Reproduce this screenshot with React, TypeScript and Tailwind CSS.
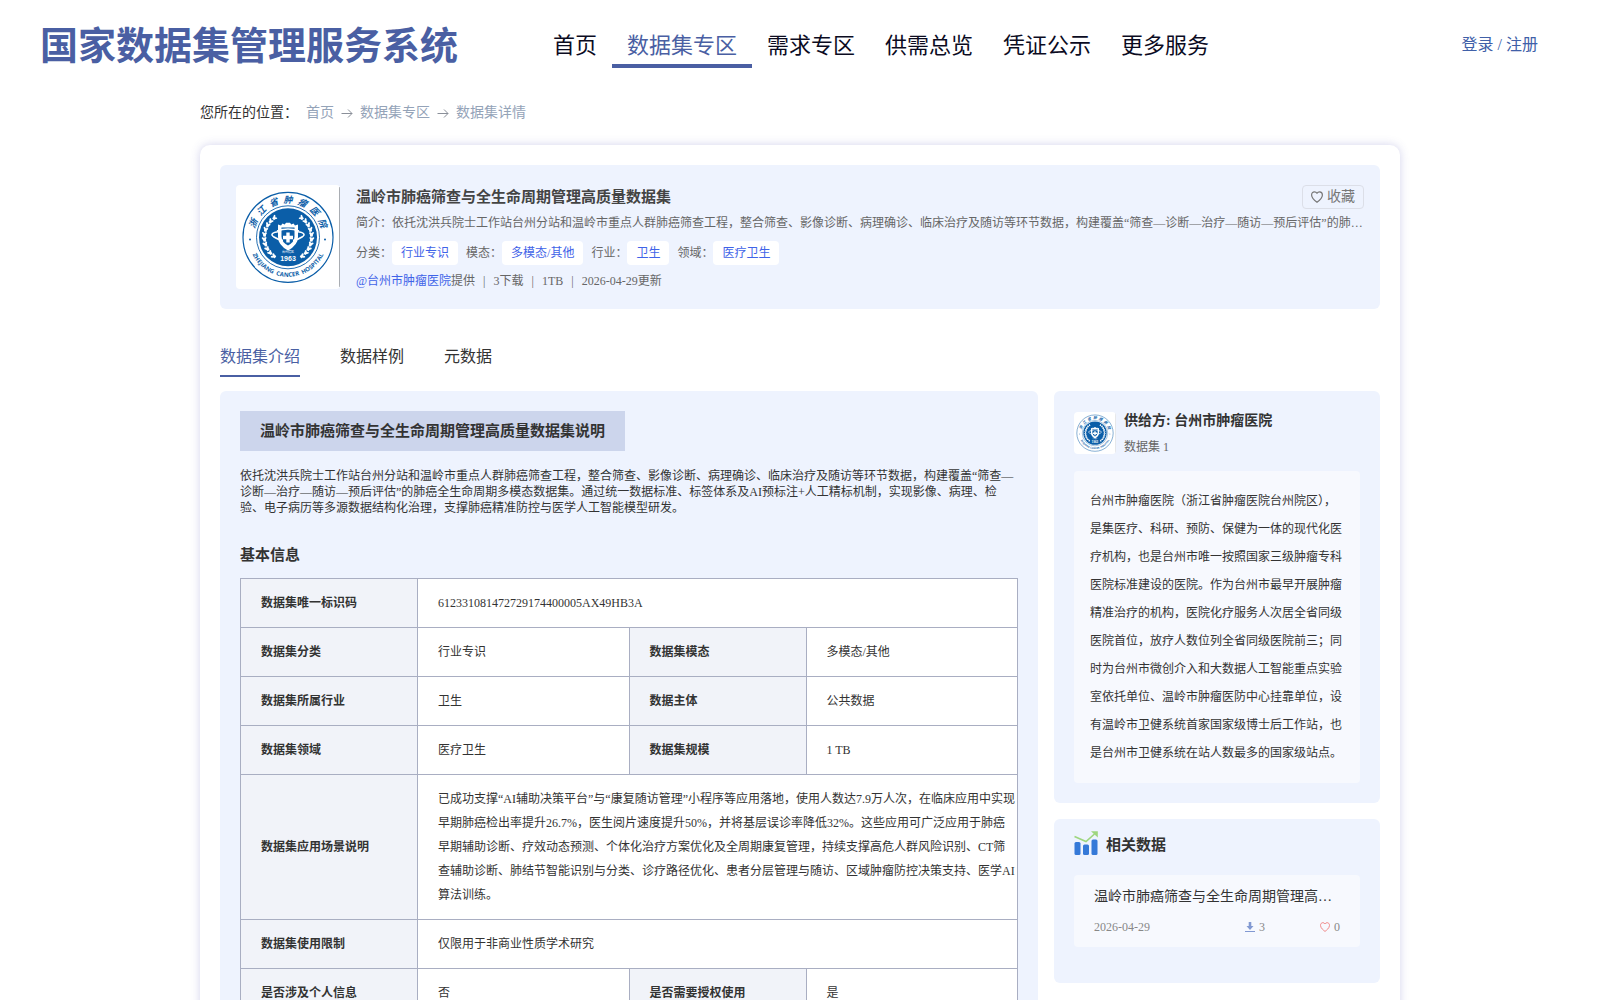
import React, { useState } from "react";

const navItems = ["首页", "数据集专区", "需求专区", "供需总览", "凭证公示", "更多服务"];
const crumbs = ["首页", "数据集专区", "数据集详情"];
const tabs = ["数据集介绍", "数据样例", "元数据"];
const tags = [
    { label: "分类：", value: "行业专识" },
    { label: "模态：", value: "多模态/其他" },
    { label: "行业：", value: "卫生" },
    { label: "领域：", value: "医疗卫生" },
];

const datasetName = "温岭市肺癌筛查与全生命周期管理高质量数据集";
const intro =
    "依托沈洪兵院士工作站台州分站和温岭市重点人群肺癌筛查工程，整合筛查、影像诊断、病理确诊、临床治疗及随访等环节数据，构建覆盖“筛查—诊断—治疗—随访—预后评估”的肺癌全生命周期多模态数据集。通过统一数据标准、标签体系及AI预标注+人工精标机制，实现影像、病理、检验、电子病历等多源数据结构化治理，支撑肺癌精准防控与医学人工智能模型研发。";
const supplierText =
    "台州市肿瘤医院（浙江省肿瘤医院台州院区），是集医疗、科研、预防、保健为一体的现代化医疗机构，也是台州市唯一按照国家三级肿瘤专科医院标准建设的医院。作为台州市最早开展肿瘤精准治疗的机构，医院化疗服务人次居全省同级医院首位，放疗人数位列全省同级医院前三；同时为台州市微创介入和大数据人工智能重点实验室依托单位、温岭市肿瘤医防中心挂靠单位，设有温岭市卫健系统首家国家级博士后工作站，也是台州市卫健系统在站人数最多的国家级站点。";

// one or two label/value pairs per row
const rows: string[][] = [
    ["数据集唯一标识码", "612331081472729174400005AX49HB3A"],
    ["数据集分类", "行业专识", "数据集模态", "多模态/其他"],
    ["数据集所属行业", "卫生", "数据主体", "公共数据"],
    ["数据集领域", "医疗卫生", "数据集规模", "1 TB"],
    [
        "数据集应用场景说明",
        "已成功支撑“AI辅助决策平台”与“康复随访管理”小程序等应用落地，使用人数达7.9万人次，在临床应用中实现早期肺癌检出率提升26.7%，医生阅片速度提升50%，并将基层误诊率降低32%。这些应用可广泛应用于肺癌早期辅助诊断、疗效动态预测、个体化治疗方案优化及全周期康复管理，持续支撑高危人群风险识别、CT筛查辅助诊断、肺结节智能识别与分类、诊疗路径优化、患者分层管理与随访、区域肿瘤防控决策支持、医学AI算法训练。",
    ],
    ["数据集使用限制", "仅限用于非商业性质学术研究"],
    ["是否涉及个人信息", "否", "是否需要授权使用", "是"],
];

const leaves = [-50, -38, -26, -14, -2, 10, 22, 34, 46, 58];

function HospitalLogo({ id, className }: { id: string; className: string }) {
    return (
        <svg viewBox="0 0 104 104" className={className} role="img" aria-label="浙江省肿瘤医院">
            <defs>
                <path id={`${id}-top`} d="M 19.9 64 A 34.2 34.2 0 1 1 84.1 64" />
                <path id={`${id}-bottom`} d="M 12.5 52.3 A 39.5 39.5 0 0 0 91.5 52.3" />
            </defs>
            <rect width="104" height="104" fill="#fff" />
            <path d="M103.5 2V102" stroke="#a9adb3" strokeWidth="1" />
            <circle cx="52" cy="52.3" r="45" fill="none" stroke="#0b5ea8" strokeWidth="1.2" />
            <circle cx="52" cy="52.3" r="31.5" fill="none" stroke="#0b5ea8" strokeWidth="0.9" />
            <circle cx="52" cy="52.3" r="29" fill="#0b5ea8" />
            <text fill="#0b5ea8" fontSize="9" fontWeight="bold" fontStyle="italic" textAnchor="middle">
                <textPath href={`#${id}-top`} startOffset="50%">
                    {"浙\u2002江\u2002省\u2002肿\u2002瘤\u2002医\u2002院"}
                </textPath>
            </text>
            <text fill="#0b5ea8" fontSize="6" fontWeight="bold" fontFamily="Open Sans" textAnchor="middle">
                <textPath href={`#${id}-bottom`} startOffset="50%">{"ZHEJIANG\u2002CANCER\u2002HOSPITAL"}</textPath>
            </text>
            <circle cx="14" cy="54.5" r="1" fill="#0b5ea8" />
            <circle cx="89" cy="54.5" r="1" fill="#0b5ea8" />
            {[-1, 1].map((side) => (
                <g key={side} transform={`translate(52 52.3) scale(${side} 1)`}>
                    <path d="M17 -16 A 23.500 23.500 0 0 1 13 19.500" fill="none" stroke="#fff" strokeWidth="0.6" />
                    {leaves.map((a) => (
                        <g key={a} transform={`rotate(${a}) translate(23.500 0)`} fill="#fff">
                            <ellipse cx="-1.800" cy="-1" rx="2.600" ry="1" transform="rotate(50)" />
                            <ellipse cx="2" cy="-1" rx="2.800" ry="1.100" transform="rotate(-50)" />
                        </g>
                    ))}
                </g>
            ))}
            <path d="M42 39.500l3 1 1.500-2 2.200 1 1.300-1.700h4l1.300 1.700 2.200-1 1.500 2 3-1v12.500q0 8-10 13.500q-10-5.500-10-13.500z" fill="#fff" />
            <path d="M45.500 42.500h13v9q0 5.500-6.500 9q-6.500-3.500-6.500-9z" fill="#0b5ea8" />
            <path d="M50.300 47.500h3.400v3.300h3.300v3.400h-3.300v3.300h-3.400v-3.300h-3.300v-3.400h3.300z" fill="#fff" />
            <path d="M43 46.500C36 47.500 34 49.500 38 52c3 2 6 3 9 3.500M61 46.500c7 1 9 3 5 5.500c-3 2-6 3-9 3.500M41 46q11-4 22 0" fill="none" stroke="#fff" strokeWidth="1.600" />
            <text x="52" y="68" fill="#fff" fontSize="3" textAnchor="middle">台州院区</text>
            <text x="52" y="76" fill="#fff" fontSize="7" fontWeight="bold" fontFamily="Liberation Sans" textAnchor="middle">1963</text>
        </svg>
    );
}

function Heart({ className }: { className: string }) {
    return (
        <svg viewBox="0 0 12 12" className={className} fill="none" stroke="currentColor" strokeWidth="1.200" strokeLinejoin="round">
            <path d="M6 11.300C4.500 10.200 .6 7.300 .6 4C.6 2.100 1.900 .8 3.400 .8C4.600 .8 5.500 1.400 6 2.300C6.500 1.400 7.400 .8 8.600 .8C10.100 .8 11.400 2.100 11.400 4C11.400 7.300 7.500 10.200 6 11.300Z" />
        </svg>
    );
}

export default function App() {
    const [activeTab, setActiveTab] = useState(tabs[0]);
    const [liked, setLiked] = useState(false);

    return (
        <div className="min-h-screen bg-white text-[#333] font-['Liberation_Serif','Noto_Sans_CJK_SC',serif]">
            <header className="flex h-[90px] items-center pl-10 pr-[62px]">
                <h1 className="w-[498px] pt-0.5 text-[38px] font-bold text-[#4a5fa3]">国家数据集管理服务系统</h1>
                <nav className="flex flex-1">
                    {navItems.map((item) => (
                        <a
                            key={item}
                            href="#"
                            className={`px-[15px] pt-1.5 h-[46px] text-[22px] leading-9 border-b-4 ${
                                item === "数据集专区" ? "border-[#4a5fa3] text-[#4a5fa3]" : "border-transparent text-[#0b0b1f]"
                            }`}
                        >
                            {item}
                        </a>
                    ))}
                </nav>
                <a href="#" className="text-base text-[#4060a8]">登录 / 注册</a>
            </header>

            <div className="mx-auto w-full max-w-[1200px]">
                <div className="flex h-[55px] items-center pb-2.5 text-sm">
                    <span className="mr-2">您所在的位置：</span>
                    {crumbs.map((crumb, idx) => (
                        <React.Fragment key={crumb}>
                            {idx > 0 && (
                                <svg viewBox="0 0 12 12" className="mx-[7px] size-3" fill="none" stroke="#8a8f99" strokeWidth="1">
                                    <path d="M.5 6.500H11M7 2.500L11 6.500L7 10.500" />
                                </svg>
                            )}
                            <a href="#" className="text-[#94a3b8]">{crumb}</a>
                        </React.Fragment>
                    ))}
                </div>

                <main className="rounded-[10px] bg-white p-5 shadow-[0_0_10px_rgba(80,80,180,0.25)]">
                    <section className="flex h-36 gap-4 rounded-md bg-[#eef3fe] px-4 py-5">
                        <HospitalLogo id="main" className="size-[104px] shrink-0 rounded-sm" />
                        <div className="min-w-0 flex-1 text-xs text-[#666]">
                            <div className="flex h-6 items-center justify-between">
                                <h2 className="pt-0.5 text-[15px] font-bold text-[#444]">{datasetName}</h2>
                                <button
                                    onClick={() => setLiked(!liked)}
                                    aria-pressed={liked}
                                    className="flex h-6 items-center gap-1 rounded-sm border border-[#dcdfe8] px-2 text-sm text-[#777]"
                                >
                                    <Heart className="size-3" />
                                    收藏
                                </button>
                            </div>
                            <p className="mt-1 h-5 truncate leading-5">简介：{intro}</p>
                            <div className="mt-2 flex h-6 items-center gap-2">
                                {tags.map((tag) => (
                                    <div key={tag.label} className="flex items-center">
                                        <span>{tag.label}</span>
                                        <span className="rounded bg-white px-[9px] leading-6 text-[#3f63e8]">{tag.value}</span>
                                    </div>
                                ))}
                            </div>
                            <div className="mt-2 flex leading-4">
                                <a href="#" className="text-[#3f63e8]">@台州市肿瘤医院</a>
                                <span>提供</span>
                                <span className="mx-2">|</span>
                                <span>3下载</span>
                                <span className="mx-2">|</span>
                                <span>1TB</span>
                                <span className="mx-2">|</span>
                                <span>2026-04-29更新</span>
                            </div>
                        </div>
                    </section>

                    <div className="mt-7 flex gap-10" role="tablist">
                        {tabs.map((tab) => (
                            <button
                                key={tab}
                                role="tab"
                                aria-selected={tab === activeTab}
                                onClick={() => setActiveTab(tab)}
                                className={`h-10 border-b-2 pt-0.5 text-base ${
                                    tab === activeTab ? "border-[#4a5fa3] text-[#4a5fa3]" : "border-transparent"
                                }`}
                            >
                                {tab}
                            </button>
                        ))}
                    </div>

                    <div className="mt-[14px] flex items-start gap-4">
                        <section className="min-w-0 flex-1 rounded-md bg-[#eef3fe] p-5">
                            <h3 className="w-fit bg-[#ccd5ec] px-5 text-[15px] leading-10 font-bold">{datasetName}说明</h3>
                            <p className="mt-[17px] text-xs leading-4">{intro}</p>
                            <h3 className="mt-7 mb-3 text-[15px] leading-[22px] font-bold">基本信息</h3>
                            <table className="w-full table-fixed border-collapse bg-white text-xs leading-6">
                                <colgroup>
                                    <col className="w-[177px]" />
                                    <col />
                                    <col className="w-[177px]" />
                                    <col />
                                </colgroup>
                                <tbody>
                                    {rows.map((row) => (
                                        <tr key={row[0]}>
                                            {row.map((cell, idx) =>
                                                idx % 2 === 0 ? (
                                                    <th key={idx} scope="row" className="border border-[#a9aec2] bg-[#f1f3f9] py-3 pl-5 text-left font-bold">
                                                        {cell}
                                                    </th>
                                                ) : (
                                                    <td key={idx} colSpan={row.length === 2 ? 3 : 1} className="border border-[#a9aec2] py-3 pr-0.5 pl-5">
                                                        {cell}
                                                    </td>
                                                )
                                            )}
                                        </tr>
                                    ))}
                                </tbody>
                            </table>
                        </section>

                        <aside className="w-[326px] shrink-0 space-y-4">
                            <section className="rounded-md bg-[#eef3fe] p-5">
                                <div className="flex h-11 items-center gap-2">
                                    <HospitalLogo id="side" className="size-[42px] rounded-sm" />
                                    <div className="pt-0.5">
                                        <h3 className="text-sm leading-6 font-bold">供给方: 台州市肿瘤医院</h3>
                                        <p className="mt-0.5 text-xs leading-6 text-[#666]">数据集 1</p>
                                    </div>
                                </div>
                                <p className="mt-4 rounded bg-[#f7f9fe] p-4 text-xs leading-7">{supplierText}</p>
                            </section>

                            <section className="rounded-md bg-[#eef3fe] px-5 pt-3 pb-9">
                                <div className="flex h-6 items-center gap-2">
                                    <svg viewBox="0 0 24 24" className="size-6">
                                        <rect x="0.5" y="11" width="6" height="13" rx="1.500" fill="#3579d8" />
                                        <rect x="9" y="13.500" width="6" height="10.500" rx="1.500" fill="#3579d8" />
                                        <rect x="17.500" y="8.500" width="6" height="15.500" rx="1.500" fill="#3579d8" />
                                        <path d="M.5 5.500L12 10.500L20.500 3" fill="none" stroke="#9ed67f" strokeWidth="1.600" />
                                        <path d="M17 .2H23.800V6.500Z" fill="#9ed67f" />
                                    </svg>
                                    <h3 className="pt-1 text-[15px] font-bold">相关数据</h3>
                                </div>
                                <div className="mt-5 rounded bg-[#f7f9fe] px-5 py-2.5">
                                    <a href="#" className="block truncate text-sm leading-6">{datasetName}</a>
                                    <div className="mt-2 flex items-center text-xs leading-5 text-[#888]">
                                        <span className="flex-1">2026-04-29</span>
                                        <span className="flex w-[75px] items-center gap-1">
                                            <svg viewBox="0 0 10 10" className="size-2.5" fill="#8299d2">
                                                <path d="M3.700 0h2.600v4h2.200L5 8 1.500 4h2.200z" />
                                                <path d="M0 9h10v1H0z" />
                                            </svg>
                                            3
                                        </span>
                                        <span className="flex items-center gap-1">
                                            <Heart className="size-[10px] text-[#f08a8a]" />
                                            0
                                        </span>
                                    </div>
                                </div>
                            </section>
                        </aside>
                    </div>
                </main>
            </div>
        </div>
    );
}
